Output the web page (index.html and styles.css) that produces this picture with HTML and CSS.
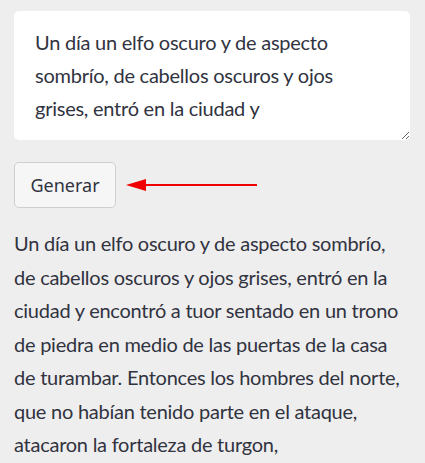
FILE: index.html
```html
<!DOCTYPE html>
<html lang="es">
<head>
<meta charset="utf-8">
<link rel="stylesheet" href="styles.css">
</head>
<body>
<main class="page">
  <div class="input-box">
    <textarea class="prompt">Un día un elfo oscuro y de aspecto sombrío, de cabellos oscuros y ojos grises, entró en la ciudad y</textarea>
  </div>
  <div class="action-row">
    <button class="btn">Generar</button>
    <svg class="arrow" width="134" height="16" viewBox="0 0 134 16">
      <line x1="18" y1="8" x2="131" y2="8" stroke="#f00000" stroke-width="2"/>
      <polygon points="0,8 20,2 20,14" fill="#f00000"/>
    </svg>
  </div>
  <p class="output">Un día un elfo oscuro y de aspecto sombrío, de cabellos oscuros y ojos grises, entró en la ciudad y encontró a tuor sentado en un trono de piedra en medio de las puertas de la casa de turambar. Entonces los hombres del norte, que no habían tenido parte en el ataque, atacaron la fortaleza de turgon,</p>
</main>
</body>
</html>
```
FILE: styles.css
```css
html, body {
  margin: 0;
  padding: 0;
  background: #eeeeee;
}
body {
  font-family: "Lato", "Noto Sans", sans-serif;
  color: #31333f;
}
.page {
  padding: 11px 14px 0 14px;
}
.input-box {
  height: 129px;
}
.prompt {
  box-sizing: border-box;
  width: 396px;
  height: 129px;
  border: none;
  border-radius: 5px;
  background: #ffffff;
  padding: 15px 20px 10px 21px;
  font-family: "Lato", "Noto Sans", sans-serif;
  font-size: 20px;
  line-height: 33px;
  letter-spacing: -0.25px;
  color: #31333f;
  resize: vertical;
  outline: none;
  overflow: hidden;
}
.action-row {
  display: flex;
  align-items: center;
  margin-top: 22px;
}
.btn {
  width: 102px;
  height: 46px;
  background: #f6f6f6;
  border: 1px solid #cfcfcf;
  border-radius: 5px;
  font-family: "Noto Sans", sans-serif;
  font-size: 18px;
  color: #31333f;
  padding: 0;
}
.arrow {
  margin-left: 10px;
}
.output {
  margin: 19px 0 0 0;
  font-size: 20px;
  line-height: 33.5px;
  letter-spacing: -0.25px;
}
```
